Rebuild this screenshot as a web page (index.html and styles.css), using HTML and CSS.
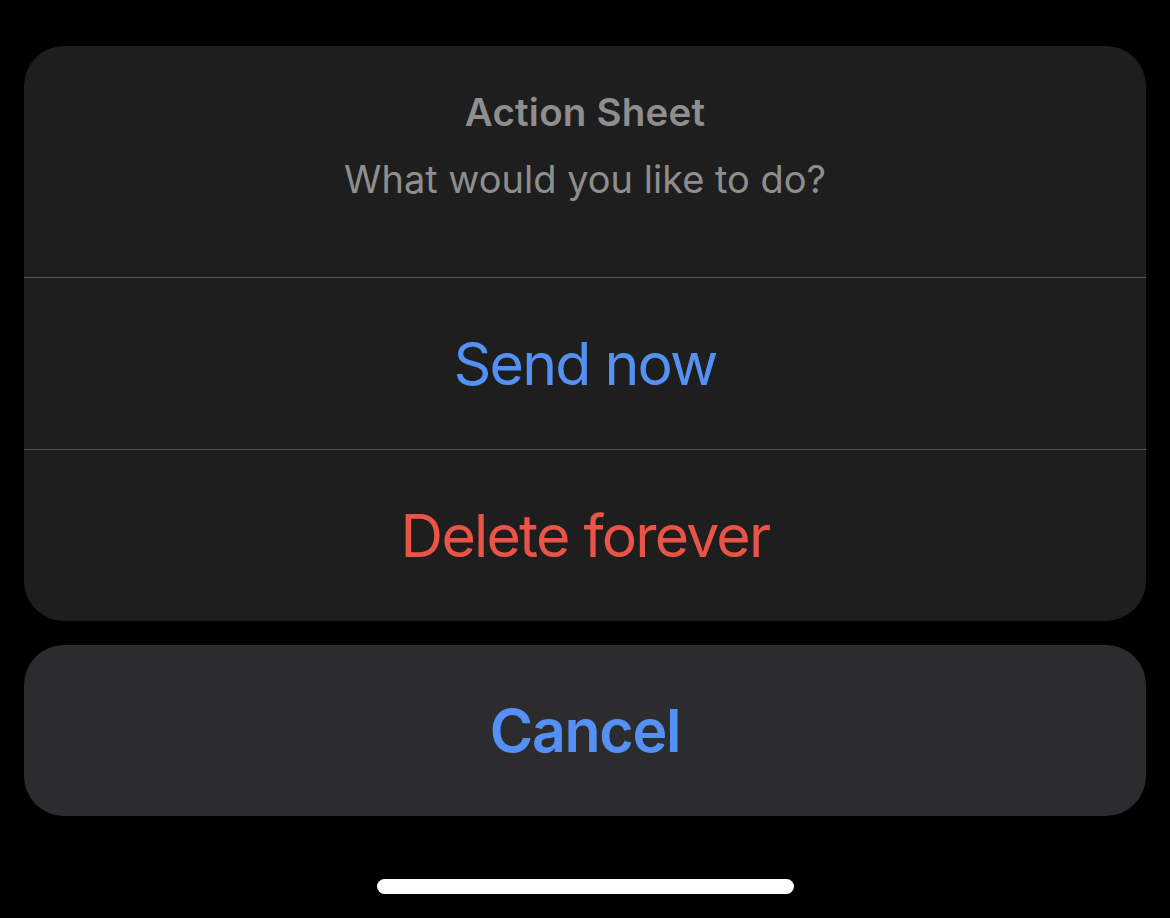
FILE: index.html
```html
<!DOCTYPE html>
<html>
<head>
<meta charset="utf-8">
<link rel="stylesheet" href="styles.css">
</head>
<body>
<div class="screen">
  <div class="sheet">
    <div class="group">
      <div class="header">
        <div class="title">Action Sheet</div>
        <div class="message">What would you like to do?</div>
      </div>
      <div class="action primary">Send now</div>
      <div class="action destructive">Delete forever</div>
    </div>
    <div class="cancel">Cancel</div>
  </div>
  <div class="home-indicator"></div>
</div>
</body>
</html>
```
FILE: styles.css
```css
html, body {
  margin: 0;
  padding: 0;
  background: #000;
}
.screen {
  width: 1170px;
  height: 918px;
  background: #000;
  display: flex;
  flex-direction: column;
  align-items: center;
  font-family: Inter, "Noto Sans", "Liberation Sans", sans-serif;
  overflow: hidden;
}
.sheet {
  width: 1122px;
  margin-top: 46px;
  display: flex;
  flex-direction: column;
  gap: 24px;
}
.group {
  background: #1e1e1e;
  border-radius: 40px;
  overflow: hidden;
  display: flex;
  flex-direction: column;
}
.header {
  height: 232px;
  box-sizing: border-box;
  padding-top: 43px;
  display: flex;
  flex-direction: column;
  align-items: center;
  border-bottom: 1px solid #555557;
}
.title {
  font-size: 38.5px;
  font-weight: 600;
  letter-spacing: 0.2px;
  color: #8e8e8e;
  line-height: 46px;
}
.message {
  font-size: 38px;
  font-weight: 400;
  color: #8e8e8e;
  line-height: 46px;
  margin-top: 21px;
}
.action {
  height: 172px;
  box-sizing: border-box;
  display: flex;
  align-items: center;
  justify-content: center;
  font-size: 59px;
  font-weight: 400;
  letter-spacing: -1.8px;
}
.action.primary {
  color: #5591f5;
  border-bottom: 1px solid #555557;
}
.action.destructive {
  color: #ea5446;
  height: 171px;
}
.cancel {
  height: 171px;
  background: #2c2c2e;
  border-radius: 40px;
  display: flex;
  align-items: center;
  justify-content: center;
  font-size: 59px;
  font-weight: 600;
  letter-spacing: -1.3px;
  color: #5591f5;
}
.home-indicator {
  width: 417px;
  height: 15px;
  border-radius: 8px;
  background: #fff;
  margin-top: 63px;
}
```
